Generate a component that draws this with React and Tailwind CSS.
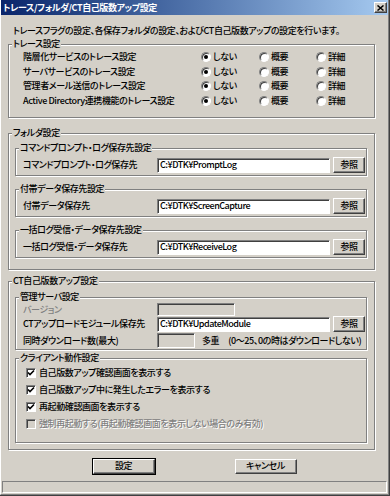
import React from "react";

const raised =
  "border border-t-white border-l-white border-r-[#404040] border-b-[#404040] shadow-[inset_-1px_-1px_0_#808080]";
const sunken =
  "border border-t-[#808080] border-l-[#808080] border-r-white border-b-white shadow-[inset_1px_1px_0_#404040]";

function Group({ title, className = "", children }) {
  return (
    <fieldset
      className={`border border-[#808080] shadow-[inset_1px_1px_0_#fff,1px_1px_0_#fff] ${className}`}
    >
      <legend className="ml-[3px] px-[1px] h-[12px] leading-[12px] whitespace-nowrap bg-[#d4d0c8]">{title}</legend>
      {children}
    </fieldset>
  );
}

function Radio({ checked, label, className = "" }) {
  return (
    <div className={`flex items-center gap-[2px] ${className}`}>
      <span
        className={`w-[10px] h-[10px] rounded-full bg-white flex items-center justify-center ${sunken}`}
      >
        {checked && <span className="w-[4px] h-[4px] rounded-full bg-black" />}
      </span>
      <span>{label}</span>
    </div>
  );
}

function Check({ checked, disabled, label }) {
  return (
    <div className="flex items-center h-[17px] pl-[10px] gap-[3px] whitespace-nowrap">
      <span
        className={`w-[10px] h-[10px] flex items-center justify-center ${sunken} ${
          disabled ? "bg-[#d4d0c8]" : "bg-white"
        }`}
      >
        {checked && (
          <svg width="8" height="8" viewBox="0 0 8 8">
            <path d="M1 3.5 L3 5.6 L7 1.5" fill="none" stroke="#000" strokeWidth="1.6" />
          </svg>
        )}
      </span>
      <span className={disabled ? "text-[#808080] [text-shadow:1px_1px_0_#fff]" : ""}>{label}</span>
    </div>
  );
}

function Button({ children, className = "" }) {
  return (
    <div className={`flex items-center justify-center bg-[#d4d0c8] ${raised} ${className}`}>
      {children}
    </div>
  );
}

function PathBox({ value }) {
  return (
    <div className={`w-[173px] h-[15px] bg-white pl-[2px] flex items-center tracking-[-0.5px] ${sunken}`}>
      {value}
    </div>
  );
}

function PathRow({ label, value }) {
  return (
    <div className="flex items-center h-[16px] pl-[7px] whitespace-nowrap">
      <span className="w-[134px]">{label}</span>
      <PathBox value={value} />
      <Button className="ml-[3px] w-[32px] h-[16px]">参照</Button>
    </div>
  );
}

const traceRows = [
  "階層化サービスのトレース設定",
  "サーバサービスのトレース設定",
  "管理者メール送信のトレース設定",
  "Active Directory連携機能のトレース設定",
];

const folders = [
  ["コマンドプロンプト・ログ保存先設定", "コマンドプロンプト・ログ保存先", "C:¥DTK¥PromptLog"],
  ["付帯データ保存先設定", "付帯データ保存先", "C:¥DTK¥ScreenCapture"],
  ["一括ログ受信・データ保存先設定", "一括ログ受信・データ保存先", "C:¥DTK¥ReceiveLog"],
];

export default function App() {
  return (
    <div className="w-[390px] h-[496px] bg-[#d4d0c8] border-r border-b border-[#404040] flex font-['Noto_Sans_CJK_JP','Noto_Sans_CJK_SC',sans-serif] [font-feature-settings:'palt'] font-medium text-[9px] tracking-[-0.4px] leading-[12px] text-black">
      <div className="flex-1 flex flex-col border-l border-l-white border-r border-r-[#808080] border-b border-b-[#808080]">
        {/* title bar */}
        <div className="h-[15px] shrink-0 flex items-center bg-linear-to-r from-[#0a246a] to-[#a6caf0]">
          <span className="pl-[2px] text-white font-bold whitespace-nowrap">トレース/フォルダ/CT自己版数アップ設定</span>
          <div className={`ml-auto mr-[1px] w-[13px] h-[11px] flex items-center justify-center bg-[#d4d0c8] ${raised}`}>
            <svg width="7" height="6" viewBox="0 0 7 6">
              <path d="M0.5 0.5 L6.5 5.5 M6.5 0.5 L0.5 5.5" stroke="#000" strokeWidth="1.5" />
            </svg>
          </div>
        </div>

        <div className="pl-[7px] flex flex-col">
          <p className="mt-[10px] ml-[5px] h-[12px] whitespace-nowrap">
            トレースフラグの設定、各保存フォルダの設定、およびCT自己版数アップの設定を行います。
          </p>

          <Group title="トレース設定" className="mt-[1px] w-[367px] pb-[9px]">
            {traceRows.map((r) => (
              <div key={r} className="flex items-center h-[14.5px] whitespace-nowrap">
                <span className="w-[192px] pl-[14px]">{r}</span>
                <Radio checked label="しない" className="w-[58px]" />
                <Radio label="概要" className="w-[57px]" />
                <Radio label="詳細" />
              </div>
            ))}
          </Group>

          <Group title="フォルダ設定" className="mt-[9px] w-[367px] pb-[11px]">
            {folders.map(([g, l, v], i) => (
              <Group key={g} title={g} className={`${i === 0 ? "mt-[3px]" : "mt-[7px]"} ml-[6px] w-[352px] pt-[3px] pb-[2px]`}>
                <PathRow label={l} value={v} />
              </Group>
            ))}
          </Group>

          <Group title="CT自己版数アップ設定" className="mt-[5px] w-[367px] pb-[6px]">
            <Group title="管理サーバ設定" className="mt-[4px] ml-[6px] w-[352px] pb-[1px]">
              <div className="pl-[7px] whitespace-nowrap">
                <div className="flex items-center h-[13px]">
                  <span className="w-[134px] leading-[10px] text-[#808080]">バージョン</span>
                  <div className={`w-[78px] h-[13px] ${sunken}`} />
                </div>
                <div className="flex items-center h-[16px]">
                  <span className="w-[134px]">CTアップロードモジュール保存先</span>
                  <PathBox value="C:¥DTK¥UpdateModule" />
                  <Button className="ml-[3px] w-[32px] h-[16px]">参照</Button>
                </div>
                <div className="flex items-center h-[15px] mt-[1px]">
                  <span className="w-[134px]">同時ダウンロード数(最大)</span>
                  <div className={`w-[38px] h-[15px] ${sunken}`} />
                  <span className="ml-[7px]">多重</span>
                  <span className="ml-[9px]">(0～25、0の時はダウンロードしない)</span>
                </div>
              </div>
            </Group>

            <Group title="クライアント動作設定" className="mt-[2px] ml-[6px] w-[352px] pb-[9px]">
              <div className="pt-[0.5px]">
                <Check checked label="自己版数アップ確認画面を表示する" />
                <Check checked label="自己版数アップ中に発生したエラーを表示する" />
                <Check checked label="再起動確認画面を表示する" />
                <Check disabled label="強制再起動する(再起動確認画面を表示しない場合のみ有効)" />
              </div>
            </Group>
          </Group>

          <div className="mt-[9px] flex justify-center gap-[80px] pr-[7px]">
            <Button className="w-[62px] h-[15px] outline outline-1 outline-black">設定</Button>
            <Button className="w-[62px] h-[15px]">キャンセル</Button>
          </div>
        </div>

        <div className="mt-[7px] ml-[1px] w-[385px] h-[12px] shrink-0 border border-t-[#808080] border-l-[#808080] border-r-white border-b-white" />
      </div>
    </div>
  );
}
